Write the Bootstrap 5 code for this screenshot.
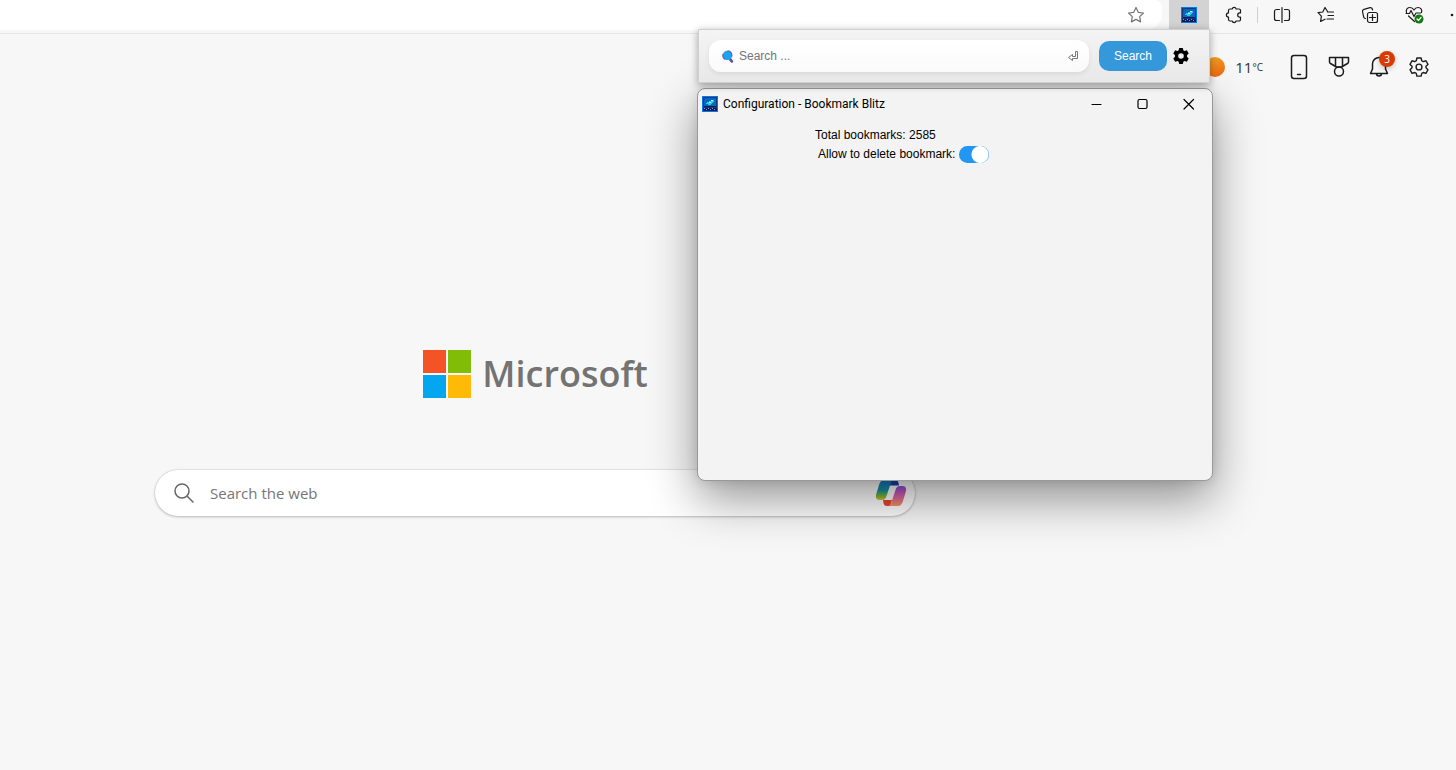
<!DOCTYPE html>
<html lang="en">
<head>
<meta charset="utf-8">
<meta name="viewport" content="width=device-width, initial-scale=1">
<title>New tab</title>
<link href="https://cdn.jsdelivr.net/npm/bootstrap@5.3.0/dist/css/bootstrap.min.css" rel="stylesheet">
<style>
  body { background: #f7f7f7; font-family: "Open Sans", "Noto Sans", sans-serif; color: #242424; }
  .browser-page { min-height: 100vh; overflow: hidden; }
  .icon-btn { border: 0; padding: 0; border-radius: 0; background: transparent; color: #1b1b1b; line-height: 1; display: inline-flex; align-items: center; justify-content: center; flex: none; }
  .icon-btn svg, .stroke-icon { display: block; fill: none; stroke: currentColor; stroke-width: 1.2; stroke-linecap: round; stroke-linejoin: round; }
  .icon-btn .pixel-icon, .icon-btn .solid-icon { stroke: none; }
  .tab-header .icon-btn svg, .stroke-icon { stroke-width: 1.5; }

  /* Browser toolbar */
  .toolbar { height: 34px; border-bottom: 1px solid #e5e5e5; background: #f7f7f7; }
  .address-bar { height: 30px; background: #fff; border-radius: 0 8px 16px 0; padding-right: 12px; }
  .address-bar .icon-btn { width: 28px; height: 30px; color: #757575; }
  .toolbar-tools { height: 30px; width: 294px; padding-left: 7px; overflow: hidden; }
  .toolbar-tools .icon-btn { width: 44px; height: 30px; }
  .toolbar-tools .ext-active { width: 40px; background: #d3d3d3; margin-right: 3px; }
  .tool-divider { width: 1px; height: 16px; background: #cfcfcf; margin: 0 2px 0 1px; flex: none; }

  /* New tab header */
  .tab-header { height: 66px; padding-right: 17px; }
  .tab-header .icon-btn { width: 40px; height: 40px; }
  .sun { width: 20px; height: 20px; border-radius: 50%; background: linear-gradient(160deg, #eba92a, #f2600c); }
  .weather { font-size: 15px; margin-right: 16px; color: #333; gap: 10px; }
  .weather sup { font-size: 10px; top: -2px; vertical-align: baseline; line-height: 1; }
  .notice { top: 4px; right: 4px; width: 16px; height: 16px; font-size: 10px; line-height: 16px; background: #d83b01; box-shadow: 0 2px 5px rgba(0,0,0,.2); }

  /* New tab content */
  .tab-content-area { margin-right: 386px; padding-top: 249px; }
  .brand { gap: 10px; }
  .brand-name { font-size: 36px; line-height: 48px; font-weight: 600; color: #737373; }
  .web-search { width: 100%; max-width: 760px; height: 46px; margin-top: 71px; padding: 0 8px 0 18px; background: #fff; border-radius: 23px; box-shadow: 0 0 2px rgba(0,0,0,.2), 0 1px 3px rgba(0,0,0,.2); }
  .web-search .stroke-icon { color: #666; }
  .web-search input { border: 0; outline: 0; background: transparent; font-size: 15px; line-height: 24px; padding: 0; margin-left: 15px; }
  .web-search input::placeholder { color: #767676; }

  /* Extension popup */
  .ext-popup { top: 29px; right: 246px; width: 512px; height: 54px; padding: 0 17px 0 10px; border: 1px solid #d0d0d0; background: linear-gradient(#f4f4f4, #e8e8e8); box-shadow: 0 2px 8px rgba(0,0,0,.35); font-family: "Liberation Sans", Arial, sans-serif; z-index: 2; }
  .find-box { height: 32px; border-radius: 12px; padding: 0 10px 0 12px; background: linear-gradient(#fff, #fafafa); box-shadow: 0 2px 5px rgba(0,0,0,.08); }
  .find-box input { border: 0; outline: 0; background: transparent; font-size: 12px; padding: 0; margin-left: 5px; min-width: 0; }
  .find-box input::placeholder { color: #757575; }
  .find-btn { width: 68px; height: 30px; margin-left: 10px; border: 0; border-radius: 10px; background: #3498db; color: #fff; font-size: 12px; padding: 0; }
  .ext-popup .gear-btn { width: 22px; height: 20px; margin-left: 3px; color: #000; }
  .gear-btn .solid-icon { fill: currentColor; }

  /* Configuration window */
  .config-window { top: 88px; right: 243px; width: 516px; height: 393px; background: #f3f3f3; border: 1px solid #999; border-radius: 8px; box-shadow: 0 18px 48px rgba(0,0,0,.42), 0 0 12px rgba(0,0,0,.12); z-index: 1; }
  .title-bar { height: 30px; padding-left: 4px; color: #000; }
  .title-bar .caption-text { font-size: 12px; line-height: 16px; font-family: Roboto, "Noto Sans", sans-serif; padding-left: 5px; }
  .title-bar .icon-btn { width: 46px; height: 30px; color: #000; }
  .config-body { padding: 7px 0 0 117px; font: 12px/19px "Liberation Sans", Arial, sans-serif; color: #000; }
  .switch-row { padding-left: 3px; }
  .config-body .form-check-input { width: 30px; height: 17px; margin: 0 0 0 4px; border: 0; border-radius: 9px; background: #ccc radial-gradient(circle at 8px 50%, #fff 8px, transparent 9px); box-shadow: none; }
  .config-body .form-check-input:checked { background: #2196f3 radial-gradient(circle at 21px 50%, #fff 8px, transparent 9px); }
</style>
</head>
<body>
<svg width="0" height="0" class="position-absolute" aria-hidden="true">
  <defs>
    <symbol id="blitz" viewBox="0 0 16 16">
      <rect width="16" height="16" fill="#0878f0"/>
      <path fill="#123a80" d="M1 1h14v11H1z"/>
      <path fill="#0b62c4" d="M2 2h12v1H2zM2 4h1v6H2zM13 3h1v7h-1z"/>
      <path fill="#0869b4" d="M3 3h10v7H3z"/>
      <path fill="#2cc6f2" d="M4 7h1V6h2V5h2V4h3v2h-1v1h-1v1H9v1H6V8H4z"/>
      <path fill="#b5f4ff" d="M9 4h2v1H9zM7 6h2v1H7z"/>
      <path fill="#101c58" d="M2 10h12v1H2zM1 12h14v3H1z"/>
      <path fill="#7f9cc8" d="M2 12h1v1H2zM4 13h1v1H4zM6 12h1v1H6zM8 13h1v1H8zM10 12h1v1h-1zM12 13h1v1h-1z"/>
    </symbol>
  </defs>
</svg>
<div class="browser-page position-relative">
  <header class="toolbar d-flex">
    <div class="address-bar flex-grow-1 d-flex justify-content-end">
      <button class="icon-btn" type="button" aria-label="Add to favorites">
        <svg width="18" height="18" viewBox="0 0 18 18"><path d="M9 1.500l2.300 4.800 5.200.7-3.800 3.600.9 5.300L9 13.400l-4.600 2.500.9-5.300L1.500 7l5.200-.7z"/></svg>
      </button>
    </div>
    <div class="toolbar-tools d-flex align-items-center">
      <button class="icon-btn ext-active" type="button" aria-label="Bookmark Blitz"><svg class="pixel-icon" width="16" height="16" shape-rendering="crispEdges"><use href="#blitz"/></svg></button>
      <button class="icon-btn" type="button" aria-label="Extensions">
        <svg width="18" height="18" viewBox="0 0 18 18"><path d="M5 3H7.200a2 2 0 0 1 3.900 0H14a1.500 1.500 0 0 1 1.500 1.500v2.400h-.7a2.100 2.100 0 0 0 0 4.200h.7v2.400A1.500 1.500 0 0 1 14 15h-2.900a2 2 0 0 1-3.900 0H5a1.500 1.500 0 0 1-1.500-1.500v-2.400a2.100 2.100 0 0 1 0-4.200V4.500A1.500 1.500 0 0 1 5 3z"/></svg>
      </button>
      <span class="tool-divider"></span>
      <button class="icon-btn" type="button" aria-label="Split screen">
        <svg width="18" height="18" viewBox="0 0 18 18"><path d="M6.500 3.500h-3a2 2 0 0 0-2 2v7a2 2 0 0 0 2 2h3M11.500 3.500h3a2 2 0 0 1 2 2v7a2 2 0 0 1-2 2h-3M9 1.500v15"/></svg>
      </button>
      <button class="icon-btn" type="button" aria-label="Favorites">
        <svg width="18" height="18" viewBox="0 0 18 18"><path d="M10.500 5.500L8 1.500 5.800 6l-4.800.7 3.400 3.400-.8 5.400 4.400-2.300M10.500 6h6M11 9.500h5.500M10 13h6.500"/></svg>
      </button>
      <button class="icon-btn" type="button" aria-label="Collections">
        <svg width="18" height="18" viewBox="0 0 18 18"><rect x="6.500" y="6.500" width="10" height="10" rx="2"/><path d="M11.500 8.500v6M8.500 11.500h6M4.500 12.500l-.8-.3a2 2 0 0 1-1.100-1.500L1.500 5.500a2 2 0 0 1 1.500-2.200l6-1.600a2 2 0 0 1 2.300 1.300l.3 1"/></svg>
      </button>
      <button class="icon-btn" type="button" aria-label="Browser essentials">
        <svg width="20" height="20" viewBox="0 0 20 20"><path d="M2.500 7.500C1.500 4 4 2.500 6 2.500 8.500 2.500 10 5 10 5s1.500-2.500 4-2.500S18.500 4.500 17.500 7.500M2 8.500h3.500l1.500-3 3 6L12 8h4.500M4.500 11l6 5.500"/><circle cx="15" cy="14" r="4.500" fill="#107c10" stroke="none"/><path stroke="#fff" d="M13 14l1.500 1.500 2.500-3"/></svg>
      </button>
      <button class="icon-btn" type="button" aria-label="Settings and more">
        <svg class="solid-icon" width="18" height="18" viewBox="0 0 18 18"><g fill="currentColor"><circle cx="3" cy="9" r="1.300"/><circle cx="9" cy="9" r="1.300"/><circle cx="15" cy="9" r="1.300"/></g></svg>
      </button>
    </div>
  </header>

  <nav class="tab-header d-flex align-items-center justify-content-end" aria-label="New tab tools">
    <div class="weather d-flex align-items-center"><span class="sun"></span><span>11<sup>°C</sup></span></div>
    <button class="icon-btn" type="button" aria-label="Mobile"><svg width="24" height="26" viewBox="0 0 24 26"><rect x="4.500" y="1.500" width="15" height="23" rx="2.500"/><path d="M10.500 20.500h3"/></svg></button>
    <button class="icon-btn" type="button" aria-label="Rewards"><svg width="24" height="24" viewBox="0 0 24 24"><path d="M2.500 2.500h19v4.500q0 1-1 1.500L14.500 12h-5L3.500 8.500q-1-.5-1-1.500zM8.500 2.500V11M15.500 2.500V11"/><circle cx="12" cy="16.500" r="4.500"/></svg></button>
    <button class="icon-btn position-relative" type="button" aria-label="Notifications, 3 new"><svg width="24" height="24" viewBox="0 0 24 24"><path d="M12 2.500A6.500 6.500 0 0 0 5.500 9v5L3.500 18.500h17l-2-4.500V9A6.500 6.500 0 0 0 12 2.500zM9.500 18.500a2.500 2.500 0 0 0 5 0"/></svg><span class="notice position-absolute rounded-circle text-white text-center">3</span></button>
    <button class="icon-btn" type="button" aria-label="Settings"><svg width="22" height="22" viewBox="0 0 24 24"><path d="M9.700 2.200h4.600l.7 3 1.600.9 3-.9 2.200 4-2.200 2v1.700l2.200 2-2.200 4-3-.9-1.600.9-.7 3H9.700l-.7-3-1.600-.9-3 .9-2.200-4 2.200-2v-1.700l-2.200-2 2.200-4 3 .9 1.600-.9z"/><circle cx="12" cy="12" r="3.200"/></svg></button>
  </nav>

  <main class="tab-content-area d-flex flex-column align-items-center">
    <div class="brand d-flex align-items-center">
      <svg width="50" height="50" viewBox="0 0 50 50" aria-hidden="true"><path fill="#f35325" d="M1 1h23v23H1z"/><path fill="#81bc06" d="M26 1h23v23H26z"/><path fill="#05a6f0" d="M1 26h23v23H1z"/><path fill="#ffba08" d="M26 26h23v23H26z"/></svg>
      <span class="brand-name">Microsoft</span>
    </div>
    <form class="web-search d-flex align-items-center">
      <svg class="stroke-icon" width="22" height="22" viewBox="0 0 22 22"><circle cx="9" cy="9" r="7"/><path d="M14 14l6 6"/></svg>
      <input class="flex-grow-1" type="text" placeholder="Search the web" aria-label="Search the web">
      <button class="icon-btn" type="button" aria-label="Copilot">
        <svg class="solid-icon" width="32" height="30" viewBox="0 0 32 30">
          <defs>
            <linearGradient id="cpA" x1="0" y1="0" x2="0" y2="1"><stop offset="0" stop-color="#1479cf"/><stop offset=".5" stop-color="#1295a6"/><stop offset=".8" stop-color="#78b73c"/><stop offset="1" stop-color="#e5c425"/></linearGradient>
            <linearGradient id="cpB" x1="0" y1="0" x2="0" y2="1"><stop offset="0" stop-color="#8f4de0"/><stop offset=".5" stop-color="#dd62a7"/><stop offset="1" stop-color="#fb9360"/></linearGradient>
          </defs>
          <path fill="#173fae" d="M14 2h6q3 0 3.500 3l.5 2.500h-9z"/>
          <path fill="#e4492b" d="M8 22h9l-2 6h-3q-3 0-3.500-3z"/>
          <path fill="url(#cpA)" d="M9 2h10q-2.500 0-3.500 4l-4 12q-1 4-4.500 4H5q-5 0-4-5L4 7Q5.500 2 9 2z"/>
          <path fill="url(#cpB)" d="M23 28H13q2.500 0 3.500-4l4-12q1-4 4.500-4h2q5 0 4 5l-3 10q-1.500 5-5 5z"/>
        </svg>
      </button>
    </form>
  </main>

  <section class="ext-popup position-absolute d-flex align-items-center" aria-label="Bookmark search">
    <div class="find-box d-flex align-items-center flex-grow-1">
      <svg width="13" height="13" viewBox="0 0 12 12" aria-hidden="true"><path d="M8 8l2 2.500" stroke="#6b4a97" stroke-width="2.500" stroke-linecap="round"/><circle cx="6" cy="5" r="4.300" fill="#18a4ee"/><path d="M6 .7a4.300 4.300 0 0 1 4 5.500M2 3.500a4.300 4.300 0 0 0 2 5.300" fill="none" stroke="#705898"/></svg>
      <input class="flex-grow-1" type="text" placeholder="Search ..." aria-label="Search bookmarks">
      <svg width="11" height="12" viewBox="0 0 11 12" fill="none" stroke="#777" aria-hidden="true"><path d="M7.500 1.500h2v7h-5v2l-4-3 4-3v2h3z"/></svg>
    </div>
    <button class="btn find-btn" type="button">Search</button>
    <button class="icon-btn gear-btn" type="button" aria-label="Configuration">
      <svg class="solid-icon" width="16" height="16" viewBox="0 0 16 16"><path fill-rule="evenodd" d="M6.200 0h3.600l.5 2.300 1.300.8 2.300-.8 1.800 3.200L14 7.200v1.600l1.700 1.700-1.800 3.200-2.300-.8-1.300.8-.5 2.300H6.200l-.5-2.300-1.300-.8-2.300.8L.3 10.500 2 8.800V7.200L.3 5.500l1.800-3.200 2.300.8 1.300-.8zM8 5.200a2.800 2.800 0 1 0 0 5.600 2.800 2.800 0 0 0 0-5.600z"/></svg>
    </button>
  </section>

  <section class="config-window position-absolute" aria-label="Configuration">
    <div class="title-bar d-flex align-items-center">
      <svg width="16" height="16" shape-rendering="crispEdges" aria-hidden="true"><use href="#blitz"/></svg>
      <span class="caption-text flex-grow-1">Configuration - Bookmark Blitz</span>
      <button class="icon-btn" type="button" aria-label="Minimize"><svg width="12" height="12" viewBox="0 0 12 12"><path d="M1 6.500h9"/></svg></button>
      <button class="icon-btn" type="button" aria-label="Maximize"><svg width="12" height="12" viewBox="0 0 12 12"><rect x="1" y="1.500" width="9" height="9" rx="1.500"/></svg></button>
      <button class="icon-btn" type="button" aria-label="Close"><svg width="12" height="12" viewBox="0 0 12 12"><path d="M1 1.500l9.500 9.500M10.500 1.500L1 11"/></svg></button>
    </div>
    <div class="config-body">
      <div>Total bookmarks: 2585</div>
      <div class="switch-row d-flex align-items-center">
        <label for="allowDelete">Allow to delete bookmark:</label>
        <input class="form-check-input" type="checkbox" role="switch" id="allowDelete" checked>
      </div>
    </div>
  </section>
</div>
<script src="https://cdn.jsdelivr.net/npm/bootstrap@5.3.0/dist/js/bootstrap.bundle.min.js"></script>
</body>
</html>
